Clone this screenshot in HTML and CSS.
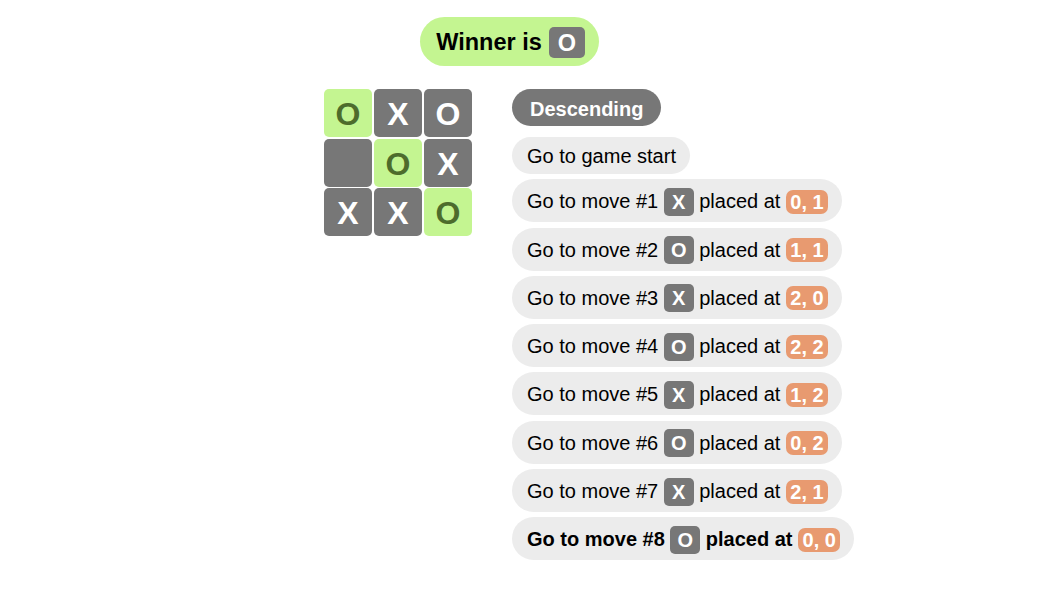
FILE: index.html
```html
<!DOCTYPE html>
<html>
<head>
<meta charset="utf-8">
<link rel="stylesheet" href="styles.css">
</head>
<body>
<div class="page">
  <div class="top">
    <div class="winner">Winner is <span class="mark mark-lg">O</span></div>
  </div>
  <div class="game">
    <div class="board">
      <div class="sq win">O</div>
      <div class="sq">X</div>
      <div class="sq">O</div>
      <div class="sq"></div>
      <div class="sq win">O</div>
      <div class="sq">X</div>
      <div class="sq">X</div>
      <div class="sq">X</div>
      <div class="sq win">O</div>
    </div>
    <div class="history">
      <button class="sort">Descending</button>
      <div class="item start">Go to game start</div>
      <div class="item">Go to move #1 <span class="mark">X</span> placed at <span class="pos">0, 1</span></div>
      <div class="item">Go to move #2 <span class="mark">O</span> placed at <span class="pos">1, 1</span></div>
      <div class="item">Go to move #3 <span class="mark">X</span> placed at <span class="pos">2, 0</span></div>
      <div class="item">Go to move #4 <span class="mark">O</span> placed at <span class="pos">2, 2</span></div>
      <div class="item">Go to move #5 <span class="mark">X</span> placed at <span class="pos">1, 2</span></div>
      <div class="item">Go to move #6 <span class="mark">O</span> placed at <span class="pos">0, 2</span></div>
      <div class="item">Go to move #7 <span class="mark">X</span> placed at <span class="pos">2, 1</span></div>
      <div class="item current">Go to move #8 <span class="mark">O</span> placed at <span class="pos">0, 0</span></div>
    </div>
  </div>
</div>
</body>
</html>
```
FILE: styles.css
```css
* { box-sizing: border-box; }
body {
  margin: 0;
  font-family: "Liberation Sans", Arial, sans-serif;
  color: #000;
  background: #fff;
}
.page {
  padding: 17px 0 0 324px;
}
.top {
  width: 371px;
  display: flex;
  justify-content: center;
}
.winner {
  display: flex;
  align-items: center;
  gap: 7px;
  height: 49px;
  padding: 2px 14px 0 16px;
  background: #c4f591;
  border-radius: 25px;
  font-weight: bold;
  font-size: 23.5px;
}
.mark {
  display: inline-flex;
  align-items: center;
  justify-content: center;
  width: 30px;
  height: 28px;
  padding-top: 1px;
  background: #777777;
  color: #fff;
  border-radius: 5px;
  font-weight: bold;
  font-size: 20px;
}
.mark-lg {
  width: 36px;
  height: 31px;
  font-size: 23.5px;
}
.game {
  display: flex;
  gap: 40px;
  margin-top: 23px;
}
.board {
  display: grid;
  grid-template-columns: repeat(3, 48px);
  grid-auto-rows: 48px;
  gap: 1.5px 2px;
  align-self: flex-start;
}
.sq {
  background: #777777;
  color: #fff;
  border-radius: 5px;
  display: flex;
  align-items: center;
  justify-content: center;
  padding-top: 3px;
  font-weight: bold;
  font-size: 32px;
}
.sq.win {
  background: #c4f591;
  color: #4d6c2c;
}
.history {
  display: flex;
  flex-direction: column;
  align-items: flex-start;
  gap: 5.3px;
}
.sort {
  height: 37px;
  padding: 3px 18px 0;
  border: none;
  border-radius: 19px;
  background: #777777;
  color: #fff;
  font-family: inherit;
  font-weight: bold;
  font-size: 20px;
  margin-bottom: 5.7px;
}
.item {
  display: flex;
  align-items: center;
  gap: 5.5px;
  height: 43px;
  padding: 2px 14px 0 15px;
  background: #ececec;
  border-radius: 22px;
  font-size: 20px;
}
.item.start {
  height: 37px;
}
.item.current {
  font-weight: bold;
}
.pos {
  display: inline-flex;
  align-items: center;
  height: 24px;
  padding: 1px 4.5px 0;
  background: #e89a70;
  color: #fff;
  border-radius: 7px;
  font-weight: bold;
}
```
